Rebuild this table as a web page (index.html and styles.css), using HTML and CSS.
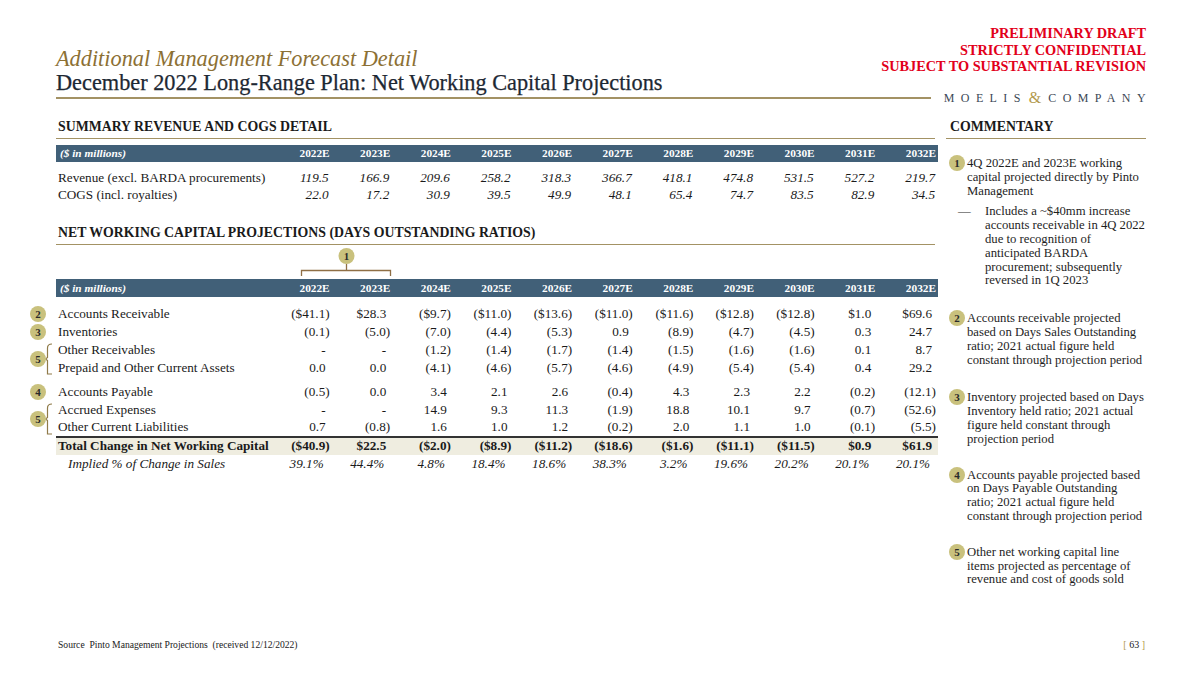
FILE: index.html
```html
<!DOCTYPE html>
<html>
<head>
<meta charset="utf-8">
<link rel="stylesheet" href="styles.css">
</head>
<body>
<div class="page">
  <div class="top">
    <div class="titles">
      <div class="t1">Additional Management Forecast Detail</div>
      <div class="t2">December 2022 Long-Range Plan: Net Working Capital Projections</div>
    </div>
    <div class="draft">PRELIMINARY DRAFT<br>STRICTLY CONFIDENTIAL<br>SUBJECT TO SUBSTANTIAL REVISION</div>
  </div>
  <div class="rule-row">
    <div class="rule"></div>
    <div class="logo"><span>MOELIS</span><span class="amp">&amp;</span><span>COMPANY</span></div>
  </div>

  <div class="content">
    <div class="main">
      <div class="sec-h">SUMMARY REVENUE AND COGS DETAIL</div>
      <table class="tbl sum">
        <colgroup><col class="cm"><col class="cl"><col span="11"></colgroup>
        <tr class="bar"><th class="mk"></th><th class="lab">($ in millions)</th><th>2022E</th><th>2023E</th><th>2024E</th><th>2025E</th><th>2026E</th><th>2027E</th><th>2028E</th><th>2029E</th><th>2030E</th><th>2031E</th><th>2032E</th></tr>
        <tr class="sp8"><td colspan="13"></td></tr>
        <tr class="it"><td></td><td class="lab">Revenue (excl. BARDA procurements)</td><td>119.5</td><td>166.9</td><td>209.6</td><td>258.2</td><td>318.3</td><td>366.7</td><td>418.1</td><td>474.8</td><td>531.5</td><td>527.2</td><td>219.7</td></tr>
        <tr class="it"><td></td><td class="lab">COGS (incl. royalties)</td><td>22.0</td><td>17.2</td><td>30.9</td><td>39.5</td><td>49.9</td><td>48.1</td><td>65.4</td><td>74.7</td><td>83.5</td><td>82.9</td><td>34.5</td></tr>
      </table>

      <div class="sec-h sec2">NET WORKING CAPITAL PROJECTIONS (DAYS OUTSTANDING RATIOS)</div>
      <table class="tbl nwc">
        <colgroup><col class="cm"><col class="cl"><col span="11"></colgroup>
        <tr class="brk"><td></td><td></td>
          <td colspan="2" class="brkcell">
            <svg width="121" height="34" viewBox="0 0 121 34">
              <path d="M30.5 31 V25.5 H119.5 V31 M75.5 25.5 V19" fill="none" stroke="#8f6f45" stroke-width="1.3"/>
              <circle cx="75.5" cy="11" r="8" fill="#c9c17d"/>
              <text x="75.5" y="15" text-anchor="middle" class="dn">1</text>
            </svg>
          </td>
          <td colspan="9"></td></tr>
        <tr class="bar"><th class="mk"></th><th class="lab">($ in millions)</th><th>2022E</th><th>2023E</th><th>2024E</th><th>2025E</th><th>2026E</th><th>2027E</th><th>2028E</th><th>2029E</th><th>2030E</th><th>2031E</th><th>2032E</th></tr>
        <tr class="sp8"><td colspan="13"></td></tr>
        <tr><td class="mk"><span class="dot">2</span></td><td class="lab">Accounts Receivable</td><td>($41.1)</td><td class="p">$28.3</td><td>($9.7)</td><td>($11.0)</td><td>($13.6)</td><td>($11.0)</td><td>($11.6)</td><td>($12.8)</td><td>($12.8)</td><td class="p">$1.0</td><td class="p">$69.6</td></tr>
        <tr><td class="mk"><span class="dot">3</span></td><td class="lab">Inventories</td><td>(0.1)</td><td>(5.0)</td><td>(7.0)</td><td>(4.4)</td><td>(5.3)</td><td class="p">0.9</td><td>(8.9)</td><td>(4.7)</td><td>(4.5)</td><td class="p">0.3</td><td class="p">24.7</td></tr>
        <tr><td class="mk" rowspan="2">
            <svg width="28" height="36" viewBox="0 0 28 36">
              <path d="M24 3 Q19.5 3 19.5 7 V16.5 L17.5 18 L19.5 19.5 V33 H24" fill="none" stroke="#8f7a48" stroke-width="1.2"/>
              <circle cx="10" cy="18" r="8" fill="#c9c17d"/>
              <text x="10" y="22" text-anchor="middle" class="dn">5</text>
            </svg></td>
          <td class="lab">Other Receivables</td><td class="p">-</td><td class="p">-</td><td>(1.2)</td><td>(1.4)</td><td>(1.7)</td><td>(1.4)</td><td>(1.5)</td><td>(1.6)</td><td>(1.6)</td><td class="p">0.1</td><td class="p">8.7</td></tr>
        <tr><td class="lab">Prepaid and Other Current Assets</td><td class="p">0.0</td><td class="p">0.0</td><td>(4.1)</td><td>(4.6)</td><td>(5.7)</td><td>(4.6)</td><td>(4.9)</td><td>(5.4)</td><td>(5.4)</td><td class="p">0.4</td><td class="p">29.2</td></tr>
        <tr class="sp6"><td colspan="13"></td></tr>
        <tr><td class="mk"><span class="dot">4</span></td><td class="lab">Accounts Payable</td><td>(0.5)</td><td class="p">0.0</td><td class="p">3.4</td><td class="p">2.1</td><td class="p">2.6</td><td>(0.4)</td><td class="p">4.3</td><td class="p">2.3</td><td class="p">2.2</td><td>(0.2)</td><td>(12.1)</td></tr>
        <tr><td class="mk" rowspan="2">
            <svg width="28" height="36" viewBox="0 0 28 36">
              <path d="M24 3 Q19.5 3 19.5 7 V16.5 L17.5 18 L19.5 19.5 V33 H24" fill="none" stroke="#8f7a48" stroke-width="1.2"/>
              <circle cx="10" cy="18" r="8" fill="#c9c17d"/>
              <text x="10" y="22" text-anchor="middle" class="dn">5</text>
            </svg></td>
          <td class="lab">Accrued Expenses</td><td class="p">-</td><td class="p">-</td><td class="p">14.9</td><td class="p">9.3</td><td class="p">11.3</td><td>(1.9)</td><td class="p">18.8</td><td class="p">10.1</td><td class="p">9.7</td><td>(0.7)</td><td>(52.6)</td></tr>
        <tr><td class="lab">Other Current Liabilities</td><td class="p">0.7</td><td>(0.8)</td><td class="p">1.6</td><td class="p">1.0</td><td class="p">1.2</td><td>(0.2)</td><td class="p">2.0</td><td class="p">1.1</td><td class="p">1.0</td><td>(0.1)</td><td>(5.5)</td></tr>
        <tr class="tot"><td class="mk"></td><td class="lab">Total Change in Net Working Capital</td><td>($40.9)</td><td class="p">$22.5</td><td>($2.0)</td><td>($8.9)</td><td>($11.2)</td><td>($18.6)</td><td>($1.6)</td><td>($11.1)</td><td>($11.5)</td><td class="p">$0.9</td><td class="p">$61.9</td></tr>
        <tr class="imp"><td></td><td class="lab">Implied % of Change in Sales</td><td>39.1%</td><td>44.4%</td><td>4.8%</td><td>18.4%</td><td>18.6%</td><td>38.3%</td><td>3.2%</td><td>19.6%</td><td>20.2%</td><td>20.1%</td><td>20.1%</td></tr>
      </table>
    </div>

    <div class="side">
      <div class="sec-h side-h">COMMENTARY</div>
      <div class="items">
        <div class="item first">
          <span class="dot">1</span>
          <div class="txt">4Q 2022E and 2023E working<br>capital projected directly by Pinto<br>Management</div>
        </div>
        <div class="sub">
          <span class="dash">—</span>
          <div class="txt">Includes a ~$40mm increase<br>accounts receivable in 4Q 2022<br>due to recognition of<br>anticipated BARDA<br>procurement; subsequently<br>reversed in 1Q 2023</div>
        </div>
        <div class="item g24">
          <span class="dot">2</span>
          <div class="txt">Accounts receivable projected<br>based on Days Sales Outstanding<br>ratio; 2021 actual figure held<br>constant through projection period</div>
        </div>
        <div class="item g24">
          <span class="dot">3</span>
          <div class="txt">Inventory projected based on Days<br>Inventory held ratio; 2021 actual<br>figure held constant through<br>projection period</div>
        </div>
        <div class="item g22">
          <span class="dot">4</span>
          <div class="txt">Accounts payable projected based<br>on Days Payable Outstanding<br>ratio; 2021 actual figure held<br>constant through projection period</div>
        </div>
        <div class="item g22">
          <span class="dot">5</span>
          <div class="txt">Other net working capital line<br>items projected as percentage of<br>revenue and cost of goods sold</div>
        </div>
      </div>
    </div>
  </div>

  <div class="foot">
    <div class="src">Source&nbsp; Pinto Management Projections&nbsp; (received 12/12/2022)</div>
    <div class="pg"><span class="br">[</span> 63 <span class="br">]</span></div>
  </div>
</div>
</body>
</html>
```

FILE: styles.css
```css
html, body {
  margin: 0;
  padding: 0;
  background: #ffffff;
}
body {
  font-family: "Liberation Serif", "Times New Roman", serif;
  color: #1a1a1a;
}
.page {
  width: 1200px;
  height: 676px;
  box-sizing: border-box;
  padding: 0 54px 0 28px;
  display: flex;
  flex-direction: column;
  overflow: hidden;
}

/* header */
.top {
  display: flex;
  justify-content: space-between;
  align-items: flex-start;
  padding-left: 28px;
}
.titles {
  padding-top: 47px;
}
.t1 {
  font-size: 22.3px;
  line-height: 24px;
  font-style: italic;
  color: #8c7034;
}
.t2 {
  font-size: 22.3px;
  line-height: 24px;
  color: #1d2833;
  -webkit-text-stroke: 0.25px #1d2833;
}
.draft {
  padding-top: 25px;
  text-align: right;
  font-size: 14.3px;
  line-height: 16.5px;
  font-weight: bold;
  color: #e2001a;
}
.rule-row {
  display: flex;
  align-items: center;
  gap: 13px;
  height: 12px;
  margin: -3px 0 0 28px;
}
.rule {
  flex: 1;
  height: 1.5px;
  background: #a39264;
}
.logo {
  font-size: 12px;
  line-height: 12px;
  letter-spacing: 6.4px;
  color: #3b4856;
  display: flex;
  align-items: center;
  white-space: nowrap;
  margin-right: -6px;
}
.logo .amp {
  color: #b39a4d;
  font-size: 16px;
  letter-spacing: 0;
  margin: 0 7px 0 2px;
}

/* content */
.content {
  display: flex;
  gap: 8px;
  margin-top: 0;
}
.main {
  width: 910px;
}
.side {
  width: 200px;
}
.sec-h {
  font-size: 13.8px;
  line-height: 16px;
  font-weight: bold;
  padding: 0 0 3px 2px;
  border-bottom: 1.5px solid #a39264;
  margin: 15px 3px 0 28px;
  white-space: nowrap;
}
.sec2 {
  margin-top: 21px;
}
.side-h {
  margin-left: 0;
  margin-right: 0;
  padding-left: 4px;
}

/* tables */
.tbl {
  border-collapse: collapse;
  table-layout: fixed;
  width: 910px;
  font-size: 13.2px;
}
.sum {
  margin-top: 5.5px;
}
.tbl col.cm { width: 28px; }
.tbl col.cl { width: 215px; }
.tbl td, .tbl th {
  padding: 0 2px 0 0;
  text-align: right;
  white-space: nowrap;
  line-height: 16px;
  vertical-align: middle;
}
.tbl .lab {
  text-align: left;
  padding-left: 2px;
}
.tbl tr { height: 18px; }
.sum tr { height: 17px; }
.tbl tr.bar { height: 17px; }
.nwc tr.bar { height: 18px; }
.bar th {
  background: #416078;
  color: #ffffff;
  font-size: 11.3px;
  font-weight: bold;
}
.bar th.lab {
  font-style: italic;
  padding-left: 4px;
}
.bar th.mk {
  background: transparent;
}
.tbl tr.sp8 { height: 8px; }
.tbl tr.sp6 { height: 6px; }
.tbl tr.sp8 td, .tbl tr.sp6 td { padding: 0; line-height: 0; }
.sum tr.it td { font-style: italic; padding-right: 3px; }
.sum tr.it td.lab { font-style: normal; padding-right: 0; }
.tbl td.p { padding-right: 6px; }
.tbl td.mk {
  padding: 0;
  text-align: left;
  vertical-align: middle;
}
.tbl td.mk svg { display: block; }
.tbl tr.brk { height: 34px; }
.tbl td.brkcell { padding: 0; text-align: left; vertical-align: top; }
.tbl td.brkcell svg { display: block; }
.dn {
  font-family: "Liberation Serif", "Times New Roman", serif;
  font-size: 11px;
  font-weight: bold;
  fill: #2a2a2a;
}
.dot {
  display: inline-flex;
  align-items: center;
  justify-content: center;
  width: 16px;
  height: 16px;
  border-radius: 50%;
  background: #c9c17d;
  color: #2a2a2a;
  font-size: 11px;
  font-weight: bold;
  line-height: 16px;
}
.tbl td.mk .dot {
  margin-left: 2px;
}
.tot td {
  background: #efede0;
  font-weight: bold;
  border-top: 2px solid #333333;
}
.tot td.mk {
  background: transparent;
  border-top: none;
}
.imp td {
  font-style: italic;
  padding-right: 8px;
}
.imp td.lab {
  padding-left: 12px;
}

/* commentary */
.items {
  font-size: 12.7px;
  line-height: 13.8px;
  color: #1e1e1e;
}
.item {
  display: flex;
  align-items: flex-start;
  gap: 2px;
  padding-left: 3px;
  margin-top: 23px;
  white-space: nowrap;
}
.item.first {
  margin-top: 18px;
}
.item.g24 { margin-top: 24px; }
.item.g22 { margin-top: 22px; }
.item .dot {
  flex: none;
  margin-top: -2px;
}
.sub {
  display: flex;
  padding-left: 12px;
  margin-top: 7px;
  white-space: nowrap;
}
.sub .dash {
  width: 27px;
  flex: none;
}

/* footer */
.foot {
  margin-top: auto;
  display: flex;
  justify-content: space-between;
  align-items: center;
  padding: 0 1px 25px 30px;
  font-size: 9.6px;
  line-height: 12px;
}
.pg {
  font-size: 10px;
}
.pg .br {
  color: #b39a4d;
}
```
